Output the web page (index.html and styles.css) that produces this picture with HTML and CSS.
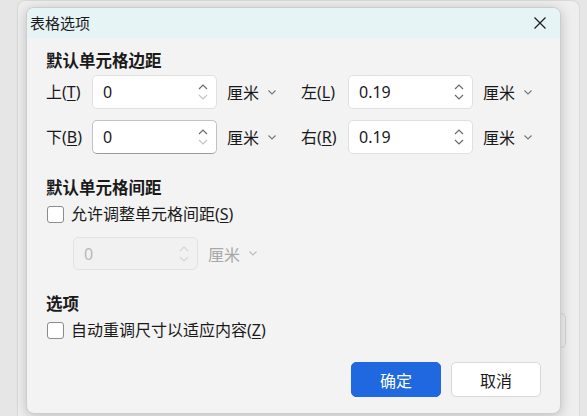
FILE: index.html
```html
<!DOCTYPE html>
<html lang="zh-CN">
<head>
<meta charset="utf-8">
<title>表格选项</title>
<link rel="stylesheet" href="styles.css">
</head>
<body>
<div class="backwin"><div class="ghost"></div></div>
<div class="dialog">
  <div class="titlebar">
    <span class="title">表格选项</span>
    <svg class="close" width="12" height="12" viewBox="0 0 12 12"><path d="M0.5 0.5 L11.5 11.5 M11.5 0.5 L0.5 11.5" stroke="#222" stroke-width="1.3" fill="none"/></svg>
  </div>
  <div class="body">
    <div class="sec first">默认单元格边距</div>
    <div class="margins">
      <div class="row">
        <div class="group">
          <span class="lbl">上(<u>T</u>)</span>
          <div class="spin"><span class="val">0</span>
            <svg class="arrows" width="10" height="16" viewBox="0 0 10 16"><polyline points="1,5 5,1 9,5" class="ar-on"/><polyline points="1,11 5,15 9,11" class="ar-off"/></svg>
          </div>
          <span class="unit">厘米</span>
          <svg class="chev" width="8" height="5" viewBox="0 0 8 5"><polyline points="0.5,0.5 4,4 7.5,0.5"/></svg>
        </div>
        <div class="group">
          <span class="lbl">左(<u>L</u>)</span>
          <div class="spin"><span class="val">0.19</span>
            <svg class="arrows" width="10" height="16" viewBox="0 0 10 16"><polyline points="1,5 5,1 9,5" class="ar-on"/><polyline points="1,11 5,15 9,11" class="ar-on"/></svg>
          </div>
          <span class="unit">厘米</span>
          <svg class="chev" width="8" height="5" viewBox="0 0 8 5"><polyline points="0.5,0.5 4,4 7.5,0.5"/></svg>
        </div>
      </div>
      <div class="row">
        <div class="group">
          <span class="lbl">下(<u>B</u>)</span>
          <div class="spin focus"><span class="val">0</span>
            <svg class="arrows" width="10" height="16" viewBox="0 0 10 16"><polyline points="1,5 5,1 9,5" class="ar-on"/><polyline points="1,11 5,15 9,11" class="ar-off"/></svg>
          </div>
          <span class="unit">厘米</span>
          <svg class="chev" width="8" height="5" viewBox="0 0 8 5"><polyline points="0.5,0.5 4,4 7.5,0.5"/></svg>
        </div>
        <div class="group">
          <span class="lbl">右(<u>R</u>)</span>
          <div class="spin"><span class="val">0.19</span>
            <svg class="arrows" width="10" height="16" viewBox="0 0 10 16"><polyline points="1,5 5,1 9,5" class="ar-on"/><polyline points="1,11 5,15 9,11" class="ar-on"/></svg>
          </div>
          <span class="unit">厘米</span>
          <svg class="chev" width="8" height="5" viewBox="0 0 8 5"><polyline points="0.5,0.5 4,4 7.5,0.5"/></svg>
        </div>
      </div>
    </div>

    <div class="sec">默认单元格间距</div>
    <div class="check"><span class="box"></span><span>允许调整单元格间距(<u>S</u>)</span></div>
    <div class="row disabled">
      <div class="spin dis"><span class="val">0</span>
        <svg class="arrows" width="10" height="16" viewBox="0 0 10 16"><polyline points="1,5 5,1 9,5"/><polyline points="1,11 5,15 9,11"/></svg>
      </div>
      <span class="unit">厘米</span>
      <svg class="chev" width="8" height="5" viewBox="0 0 8 5"><polyline points="0.5,0.5 4,4 7.5,0.5"/></svg>
    </div>

    <div class="sec">选项</div>
    <div class="check"><span class="box"></span><span>自动重调尺寸以适应内容(<u>Z</u>)</span></div>

    <div class="buttons">
      <button class="btn primary">确定</button>
      <button class="btn">取消</button>
    </div>
  </div>
</div>
</body>
</html>
```
FILE: styles.css
```css
html, body {
  margin: 0;
  padding: 0;
}
body {
  width: 587px;
  height: 416px;
  overflow: hidden;
  position: relative;
  background: #e6e6e6;
  font-family: "Noto Sans", "Noto Sans CJK SC", sans-serif;
  color: #1a1a1a;
}
.backwin {
  position: absolute;
  left: 17px;
  top: 0;
  width: 561px;
  height: 415px;
  background: #eeeeee;
  border: 1px solid #d8d8d8;
  border-bottom: none;
  border-radius: 8px 8px 0 0;
}
.ghost {
  position: absolute;
  left: 468px;
  top: 312px;
  width: 78px;
  height: 33px;
  border: 1px solid #d4d4d4;
  border-radius: 5px;
}
.dialog {
  position: absolute;
  left: 26px;
  top: 7px;
  width: 535px;
  height: 407px;
  box-sizing: border-box;
  background: #f3f3f3;
  border: 1px solid #cdcdcd;
  border-radius: 8px;
  box-shadow: 0 2px 12px rgba(0, 0, 0, 0.2);
  overflow: hidden;
  display: flex;
  flex-direction: column;
}
.titlebar {
  height: 30px;
  flex: none;
  background: #e7f4f6;
  display: flex;
  align-items: center;
  justify-content: space-between;
  padding: 0 14px 0 3px;
}
.title {
  font-size: 15px;
  line-height: 20px;
  font-family: "Noto Sans CJK SC", sans-serif;
}
.close {
  display: block;
}
.body {
  padding: 0 19px;
  display: flex;
  flex-direction: column;
}
.sec {
  font-family: "Noto Sans CJK SC", sans-serif;
  font-weight: 700;
  font-size: 16.5px;
  line-height: 22px;
  margin-top: 22px;
}
.sec.first {
  margin-top: 11px;
}
.margins {
  margin-top: 4px;
  display: flex;
  flex-direction: column;
  gap: 11px;
}
.row {
  display: flex;
  align-items: center;
}
.group {
  flex: none;
  width: 255px;
  display: flex;
  align-items: center;
}
.group + .group {
  width: auto;
}
.lbl {
  width: 46px;
  flex: none;
  font-size: 16px;
  line-height: 22px;
}
.group + .group .lbl {
  width: 47px;
}
u {
  text-decoration-thickness: 1px;
  text-underline-offset: 2px;
}
.spin {
  flex: none;
  width: 125px;
  height: 34px;
  box-sizing: border-box;
  border: 1px solid #e0e0e0;
  border-radius: 5px;
  background: #ffffff;
  display: flex;
  align-items: center;
  justify-content: space-between;
  padding: 0 8px 0 10px;
}
.spin.focus {
  border-color: #c2c2c2;
  border-bottom-color: #9a9a9a;
}
.val {
  font-size: 16px;
  line-height: 22px;
}
.arrows polyline {
  fill: none;
  stroke-width: 1.2;
}
.ar-on {
  stroke: #6a6a6a;
}
.ar-off {
  stroke: #c4c4c4;
}
.unit {
  margin-left: 10px;
  font-size: 16px;
  line-height: 22px;
  font-family: "Noto Sans CJK SC", sans-serif;
}
.chev {
  margin-left: 9px;
  display: block;
  flex: none;
}
.chev polyline {
  fill: none;
  stroke: #777;
  stroke-width: 1.1;
}
.check {
  margin-top: 5px;
  display: flex;
  align-items: center;
  gap: 7px;
  font-size: 16px;
  line-height: 22px;
}
.box {
  width: 17px;
  height: 17px;
  box-sizing: border-box;
  border: 1px solid #8c8c8c;
  border-radius: 3px;
  background: #ffffff;
  flex: none;
  margin-left: 1px;
}
.row.disabled {
  margin-top: 12px;
  margin-left: 27px;
}
.spin.dis {
  height: 33px;
  background: #f1f1f1;
  border-color: #e2e2e2;
}
.spin.dis .val {
  color: #b8b8b8;
}
.spin.dis .arrows polyline {
  stroke: #d6d6d6;
}
.row.disabled .unit {
  color: #a8a8a8;
}
.row.disabled .chev polyline {
  stroke: #bbbbbb;
}
.buttons {
  margin-top: 21px;
  display: flex;
  justify-content: flex-end;
  gap: 10px;
}
.btn {
  width: 90px;
  height: 35px;
  box-sizing: border-box;
  border: 1px solid #d9d9d9;
  border-radius: 5px;
  background: #ffffff;
  color: #1a1a1a;
  font-family: "Noto Sans CJK SC", sans-serif;
  font-size: 16px;
  padding: 0;
}
.btn.primary {
  background: #2068e0;
  border-color: #2068e0;
  color: #ffffff;
}
```
